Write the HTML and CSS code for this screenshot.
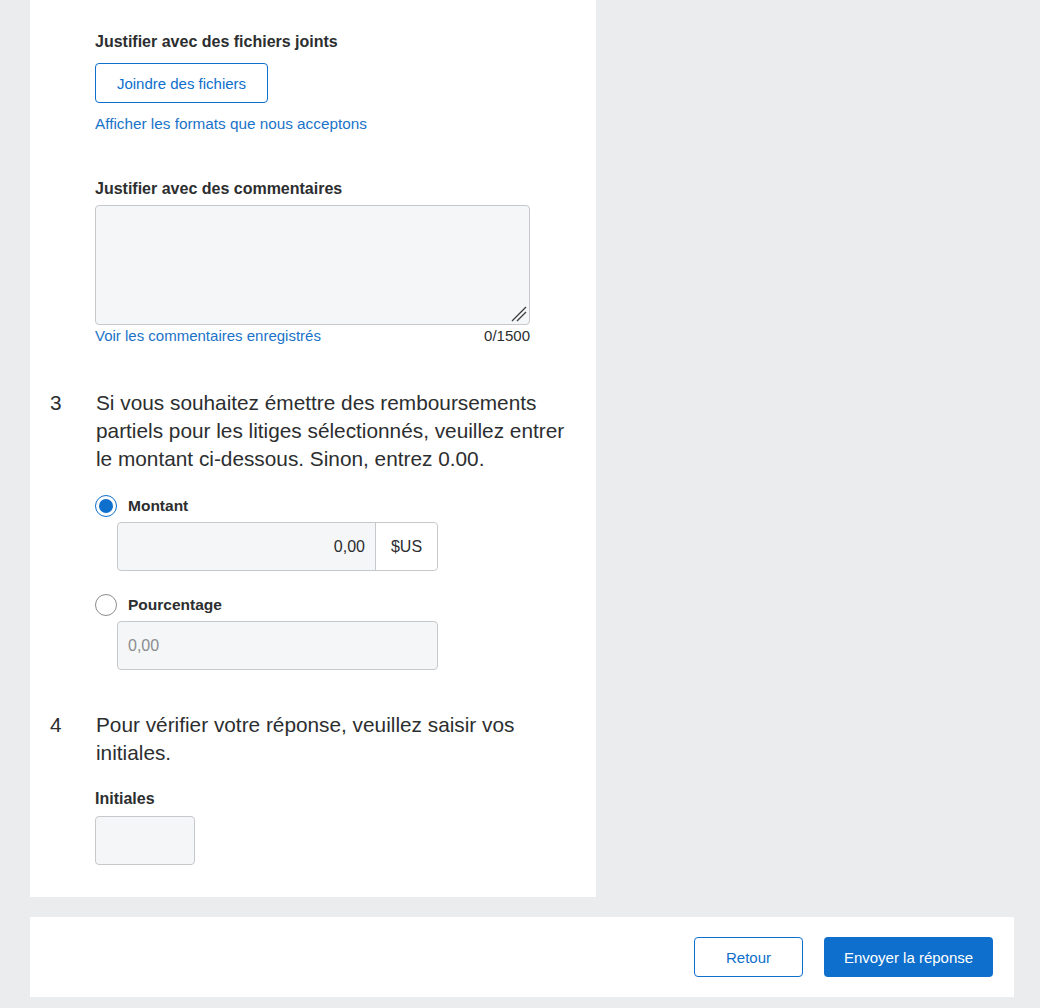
FILE: index.html
```html
<!DOCTYPE html>
<html lang="fr">
<head>
<meta charset="utf-8">
<link rel="stylesheet" href="styles.css">
</head>
<body>
<div class="page">
  <div class="card">
    <div class="block">
      <div class="label">Justifier avec des fichiers joints</div>
      <button class="btn-outline attach">Joindre des fichiers</button>
      <a class="link formats">Afficher les formats que nous acceptons</a>
    </div>
    <div class="block comments">
      <div class="label">Justifier avec des commentaires</div>
      <div class="textarea-wrap">
        <div class="textarea">
          <svg class="grip" width="18" height="18" viewBox="0 0 18 18"><path d="M16 2 L2 16 M16 7 L7 16" stroke="#3a3c3e" stroke-width="1.3" fill="none"/></svg>
        </div>
      </div>
      <div class="under">
        <a class="link">Voir les commentaires enregistrés</a>
        <span class="count">0/1500</span>
      </div>
    </div>

    <div class="question q3">
      <div class="num">3</div>
      <div class="qtext">Si vous souhaitez émettre des remboursements partiels pour les litiges sélectionnés, veuillez entrer le montant ci-dessous. Sinon, entrez 0.00.</div>
    </div>
    <div class="options">
      <div class="radio-row first">
        <span class="radio checked"></span>
        <span class="radio-label">Montant</span>
      </div>
      <div class="field amount">
        <span class="value">0,00</span>
        <span class="suffix">$US</span>
      </div>
      <div class="radio-row second">
        <span class="radio"></span>
        <span class="radio-label">Pourcentage</span>
      </div>
      <div class="field percent">
        <span class="placeholder">0,00</span>
      </div>
    </div>

    <div class="question q4">
      <div class="num">4</div>
      <div class="qtext">Pour vérifier votre réponse, veuillez saisir vos initiales.</div>
    </div>
    <div class="block initials">
      <div class="label">Initiales</div>
      <div class="field small"></div>
    </div>
  </div>

  <div class="footer">
    <button class="btn-outline back">Retour</button>
    <button class="btn-primary">Envoyer la réponse</button>
  </div>
</div>
</body>
</html>
```

FILE: styles.css
```css
* { box-sizing: border-box; }
html, body { margin: 0; padding: 0; }
body {
  background: #ebecee;
  font-family: "Liberation Sans", Arial, sans-serif;
  color: #2c2e2f;
  width: 1040px;
  height: 1008px;
  overflow: hidden;
}
.page {
  padding-left: 30px;
  padding-right: 26px;
}
.card {
  width: 566px;
  height: 897px;
  background: #fff;
  padding: 33px 0 0 65px;
}
.label {
  font-size: 16px;
  font-weight: bold;
  line-height: 18px;
  color: #2c2e2f;
}
.btn-outline {
  display: block;
  background: #fff;
  border: 1px solid #0e6fcc;
  border-radius: 4px;
  color: #0e6fcc;
  font-family: "Liberation Sans", Arial, sans-serif;
  font-size: 15px;
  padding: 0;
  cursor: pointer;
}
.attach {
  margin-top: 12px;
  width: 173px;
  height: 40px;
}
.link {
  display: block;
  color: #1a73c8;
  font-size: 15.3px;
  line-height: 18px;
  text-decoration: none;
}
.formats { margin-top: 12px; }
.comments { margin-top: 47px; }
.textarea-wrap { margin-top: 7px; }
.textarea {
  position: relative;
  width: 435px;
  height: 120px;
  background: #f5f6f7;
  border: 1px solid #c6c8cb;
  border-radius: 4px;
}
.grip { position: absolute; right: 1px; bottom: 1px; }
.under {
  width: 435px;
  display: flex;
  justify-content: space-between;
  margin-top: 2px;
  font-size: 15px;
  line-height: 18px;
}
.under .link { font-size: 15px; }
.count { color: #2c2e2f; }
.question {
  display: flex;
  margin-left: -45px;
  font-size: 20.8px;
  line-height: 28px;
  color: #2c2e2f;
}
.num { width: 46px; padding-left: 0; }
.qtext { width: 478px; }
.q3 { margin-top: 44px; }
.radio-row {
  display: flex;
  align-items: center;
  height: 22px;
}
.radio-row.first { margin-top: 22px; }
.radio {
  width: 22px;
  height: 22px;
  border-radius: 50%;
  border: 1px solid #8a8d90;
  background: #fff;
  position: relative;
}
.radio.checked {
  border: 1px solid #0e6fcc;
}
.radio.checked::after {
  content: "";
  position: absolute;
  left: 3px; top: 3px;
  width: 14px; height: 14px;
  border-radius: 50%;
  background: #0e6fcc;
}
.radio-label {
  margin-left: 11px;
  font-size: 15.5px;
  font-weight: bold;
}
.field {
  background: #f5f6f7;
  border: 1px solid #c6c8cb;
  border-radius: 4px;
  height: 49px;
}
.amount, .percent {
  width: 321px;
  margin-left: 22px;
  margin-top: 5px;
  display: flex;
  align-items: stretch;
  font-size: 16px;
}
.amount .value {
  flex: 1;
  display: flex;
  align-items: center;
  justify-content: flex-end;
  padding-right: 10px;
}
.amount .suffix {
  width: 62px;
  background: #fff;
  border-left: 1px solid #c6c8cb;
  border-radius: 0 4px 4px 0;
  display: flex;
  align-items: center;
  justify-content: center;
}
.radio-row.second { margin-top: 23px; }
.percent .placeholder {
  display: flex;
  align-items: center;
  padding-left: 10px;
  color: #8a8d90;
}
.q4 { margin-top: 41px; }
.initials { margin-top: 23px; }
.field.small {
  width: 100px;
  margin-top: 8px;
}
.footer {
  margin-top: 20px;
  width: 984px;
  height: 80px;
  background: #fff;
  display: flex;
  justify-content: flex-end;
  align-items: center;
  padding-right: 21px;
  gap: 21px;
}
.back {
  width: 109px;
  height: 40px;
}
.btn-primary {
  width: 169px;
  height: 40px;
  background: #0e6fcc;
  color: #fff;
  border: none;
  border-radius: 4px;
  font-family: "Liberation Sans", Arial, sans-serif;
  font-size: 15px;
}
```
